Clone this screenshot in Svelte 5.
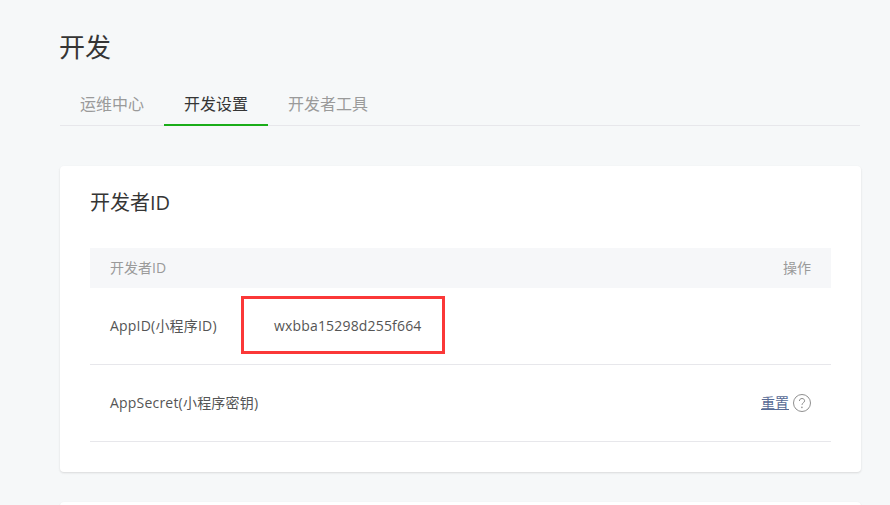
<script>
  const tabs = [
    { label: '运维中心', active: false },
    { label: '开发设置', active: true },
    { label: '开发者工具', active: false }
  ];
</script>

<main class="page">
  <h1 class="title">开发</h1>
  <nav class="tabs">
    {#each tabs as tab}
      <span class="tab" class:active={tab.active}>{tab.label}</span>
    {/each}
  </nav>

  <section class="card">
    <h2 class="card-title">开发者ID</h2>
    <div class="table">
      <div class="row head">
        <span>开发者ID</span>
        <span>操作</span>
      </div>
      <div class="row">
        <span class="label">AppID(小程序ID)</span>
        <span class="value">wxbba15298d255f664<i class="mark"></i></span>
      </div>
      <div class="row">
        <span class="label">AppSecret(小程序密钥)</span>
        <span class="ops">
          <span class="link">重置</span>
          <svg class="help" width="18" height="18" viewBox="0 0 18 18" fill="none">
            <circle cx="9" cy="9" r="8.5" stroke="#8f8f8f" stroke-width="1" />
            <path d="M6.4 7c0-1.5 1.1-2.5 2.6-2.5s2.6 1 2.6 2.3c0 1.1-.7 1.6-1.4 2.1-.7.5-1.2 1-1.2 2" stroke="#8f8f8f" stroke-width="1" />
            <circle cx="8.9" cy="13.4" r=".8" fill="#8f8f8f" />
          </svg>
        </span>
      </div>
    </div>
  </section>

  <section class="card next"></section>
</main>

<style>
  :global(body) {
    margin: 0;
    background: #f6f8f9;
    overflow: hidden;
  }

  .page {
    width: 800px;
    height: 505px;
    overflow: hidden;
    padding: 0 29px 0 60px;
    font-family: "Open Sans", "Noto Sans CJK SC", sans-serif;
    font-size: 14px;
    color: #353535;
  }

  .title {
    margin: 0 0 0 -1px;
    padding-top: 28px;
    font-size: 26px;
    line-height: 38px;
    font-weight: 400;
  }

  .tabs {
    display: flex;
    margin-top: 19px;
    height: 40px;
    border-bottom: 1px solid #e7e7eb;
  }

  .tab {
    padding: 0 20px;
    font-size: 16px;
    line-height: 38px;
    color: #9a9a9a;
    height: 39px;
  }

  .tab.active {
    color: #353535;
    border-bottom: 2px solid #1aad19;
  }

  .card {
    margin-top: 40px;
    width: 741px;
    padding: 0 30px;
    height: 306px;
    background: #fff;
    border-radius: 4px;
    box-shadow: 0 1px 2px rgba(150, 150, 150, 0.3);
  }

  .card.next {
    margin-top: 30px;
    height: 40px;
  }

  .card-title {
    margin: 0;
    padding-top: 22px;
    height: 60px;
    font-size: 20px;
    line-height: 30px;
    font-weight: 400;
  }

  .table {
    display: flex;
    flex-direction: column;
  }

  .row {
    display: flex;
    align-items: center;
    justify-content: flex-start;
    height: 74px;
    padding: 0 20px 2px;
    border-bottom: 1px solid #e7e7eb;
  }

  .row.head {
    justify-content: space-between;
    height: 38px;
    border-bottom: 0;
    background: #f6f7f9;
    color: #9a9a9a;
  }

  .label {
    width: 164px;
    color: #555;
    letter-spacing: 0.2px;
  }

  .value {
    position: relative;
    color: #555;
    letter-spacing: 0.17px;
  }

  .mark {
    position: absolute;
    left: -33px;
    top: -20px;
    width: 198px;
    height: 52px;
    border: 3px solid #fb3838;
  }

  .ops {
    margin-left: auto;
    display: flex;
    align-items: center;
    gap: 4px;
  }

  .link {
    color: #576b95;
    text-decoration: underline;
  }

  .help {
    display: block;
    margin-top: 2px;
  }
</style>
